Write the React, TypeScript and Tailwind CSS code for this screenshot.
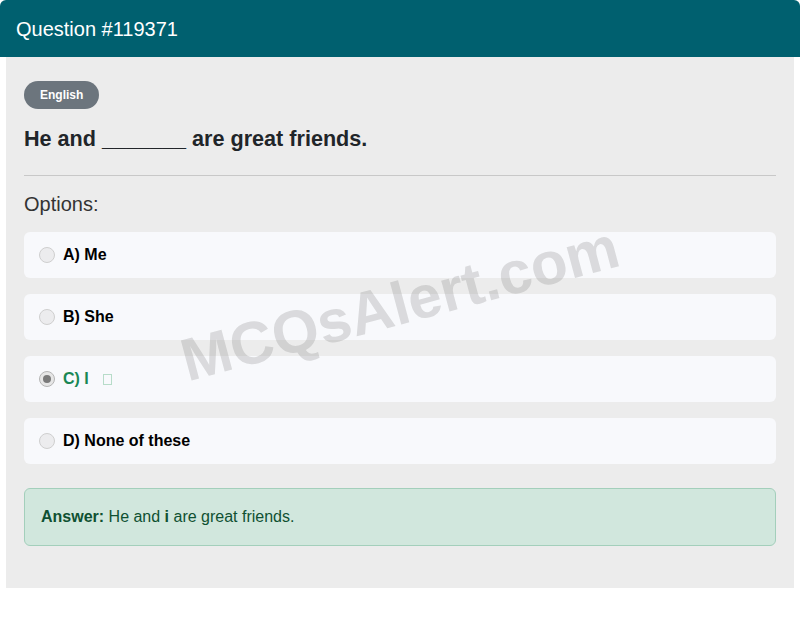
import React from "react";

type Option = { key: string; label: string; selected?: boolean };

const options: Option[] = [
  { key: "A", label: "Me" },
  { key: "B", label: "She" },
  { key: "C", label: "I", selected: true },
  { key: "D", label: "None of these" },
];

function Radio({ checked }: { checked?: boolean }) {
  return (
    <span
      className={`flex h-[16px] w-[16px] shrink-0 items-center justify-center rounded-full border ${
        checked ? "border-[#b5b5b5] bg-[#e6e6e6]" : "border-[#cfcfcf] bg-[#ececee]"
      }`}
    >
      {checked && <span className="h-[8px] w-[8px] rounded-full bg-[#7a7a7a]" />}
    </span>
  );
}

export default function App() {
  return (
    <div className="min-h-screen w-full bg-white font-['Liberation_Sans',Arial,sans-serif]">
      <div className="flex h-[57px] items-center rounded-t-[6px] bg-[#00606f] px-[16px]">
        <h1 className="text-[20px] leading-none text-white">Question #119371</h1>
      </div>

      <div className="relative mx-[6px] bg-[#ececec] px-[18px] pb-[42px] pt-[24px]">
        <span className="inline-flex h-[28px] items-center rounded-full bg-[#6c757d] px-[16px] text-[12px] font-bold text-white">
          English
        </span>

        <p className="mt-[16px] text-[21.6px] font-bold leading-[28px] text-[#212529]">
          He and _______ are great friends.
        </p>

        <hr className="mt-[22px] border-0 border-t border-[#c8c8c8]" />

        <p className="mt-[15px] text-[20px] leading-[26px] text-[#333]">Options:</p>

        <div className="mt-[15px] flex flex-col gap-[16px]">
          {options.map((o) => (
            <div
              key={o.key}
              className="flex h-[46px] items-center gap-[8px] rounded-[6px] bg-[#f8f9fc] pl-[15px]"
            >
              <Radio checked={o.selected} />
              <span
                className={`text-[16px] font-bold ${o.selected ? "text-[#198754]" : "text-black"}`}
              >
                {o.key}) {o.label}
              </span>
              {o.selected && (
                <span className="ml-[6px] h-[11px] w-[9px] border border-[#b7dcc9]" />
              )}
            </div>
          ))}
        </div>

        <div className="mt-[24px] flex h-[58px] items-center rounded-[6px] border border-[#a3cfbb] bg-[#d1e7dd] px-[16px] text-[16px] text-[#0f5132]">
          <span>
            <b>Answer:</b> He and <b>i</b> are great friends.
          </span>
        </div>

        <div className="pointer-events-none absolute left-0 right-0 top-[202px] flex justify-center">
          <span className="-rotate-[15deg] whitespace-nowrap text-[60px] font-bold text-[rgba(128,128,128,0.25)]">
            MCQsAlert.com
          </span>
        </div>
      </div>
    </div>
  );
}
